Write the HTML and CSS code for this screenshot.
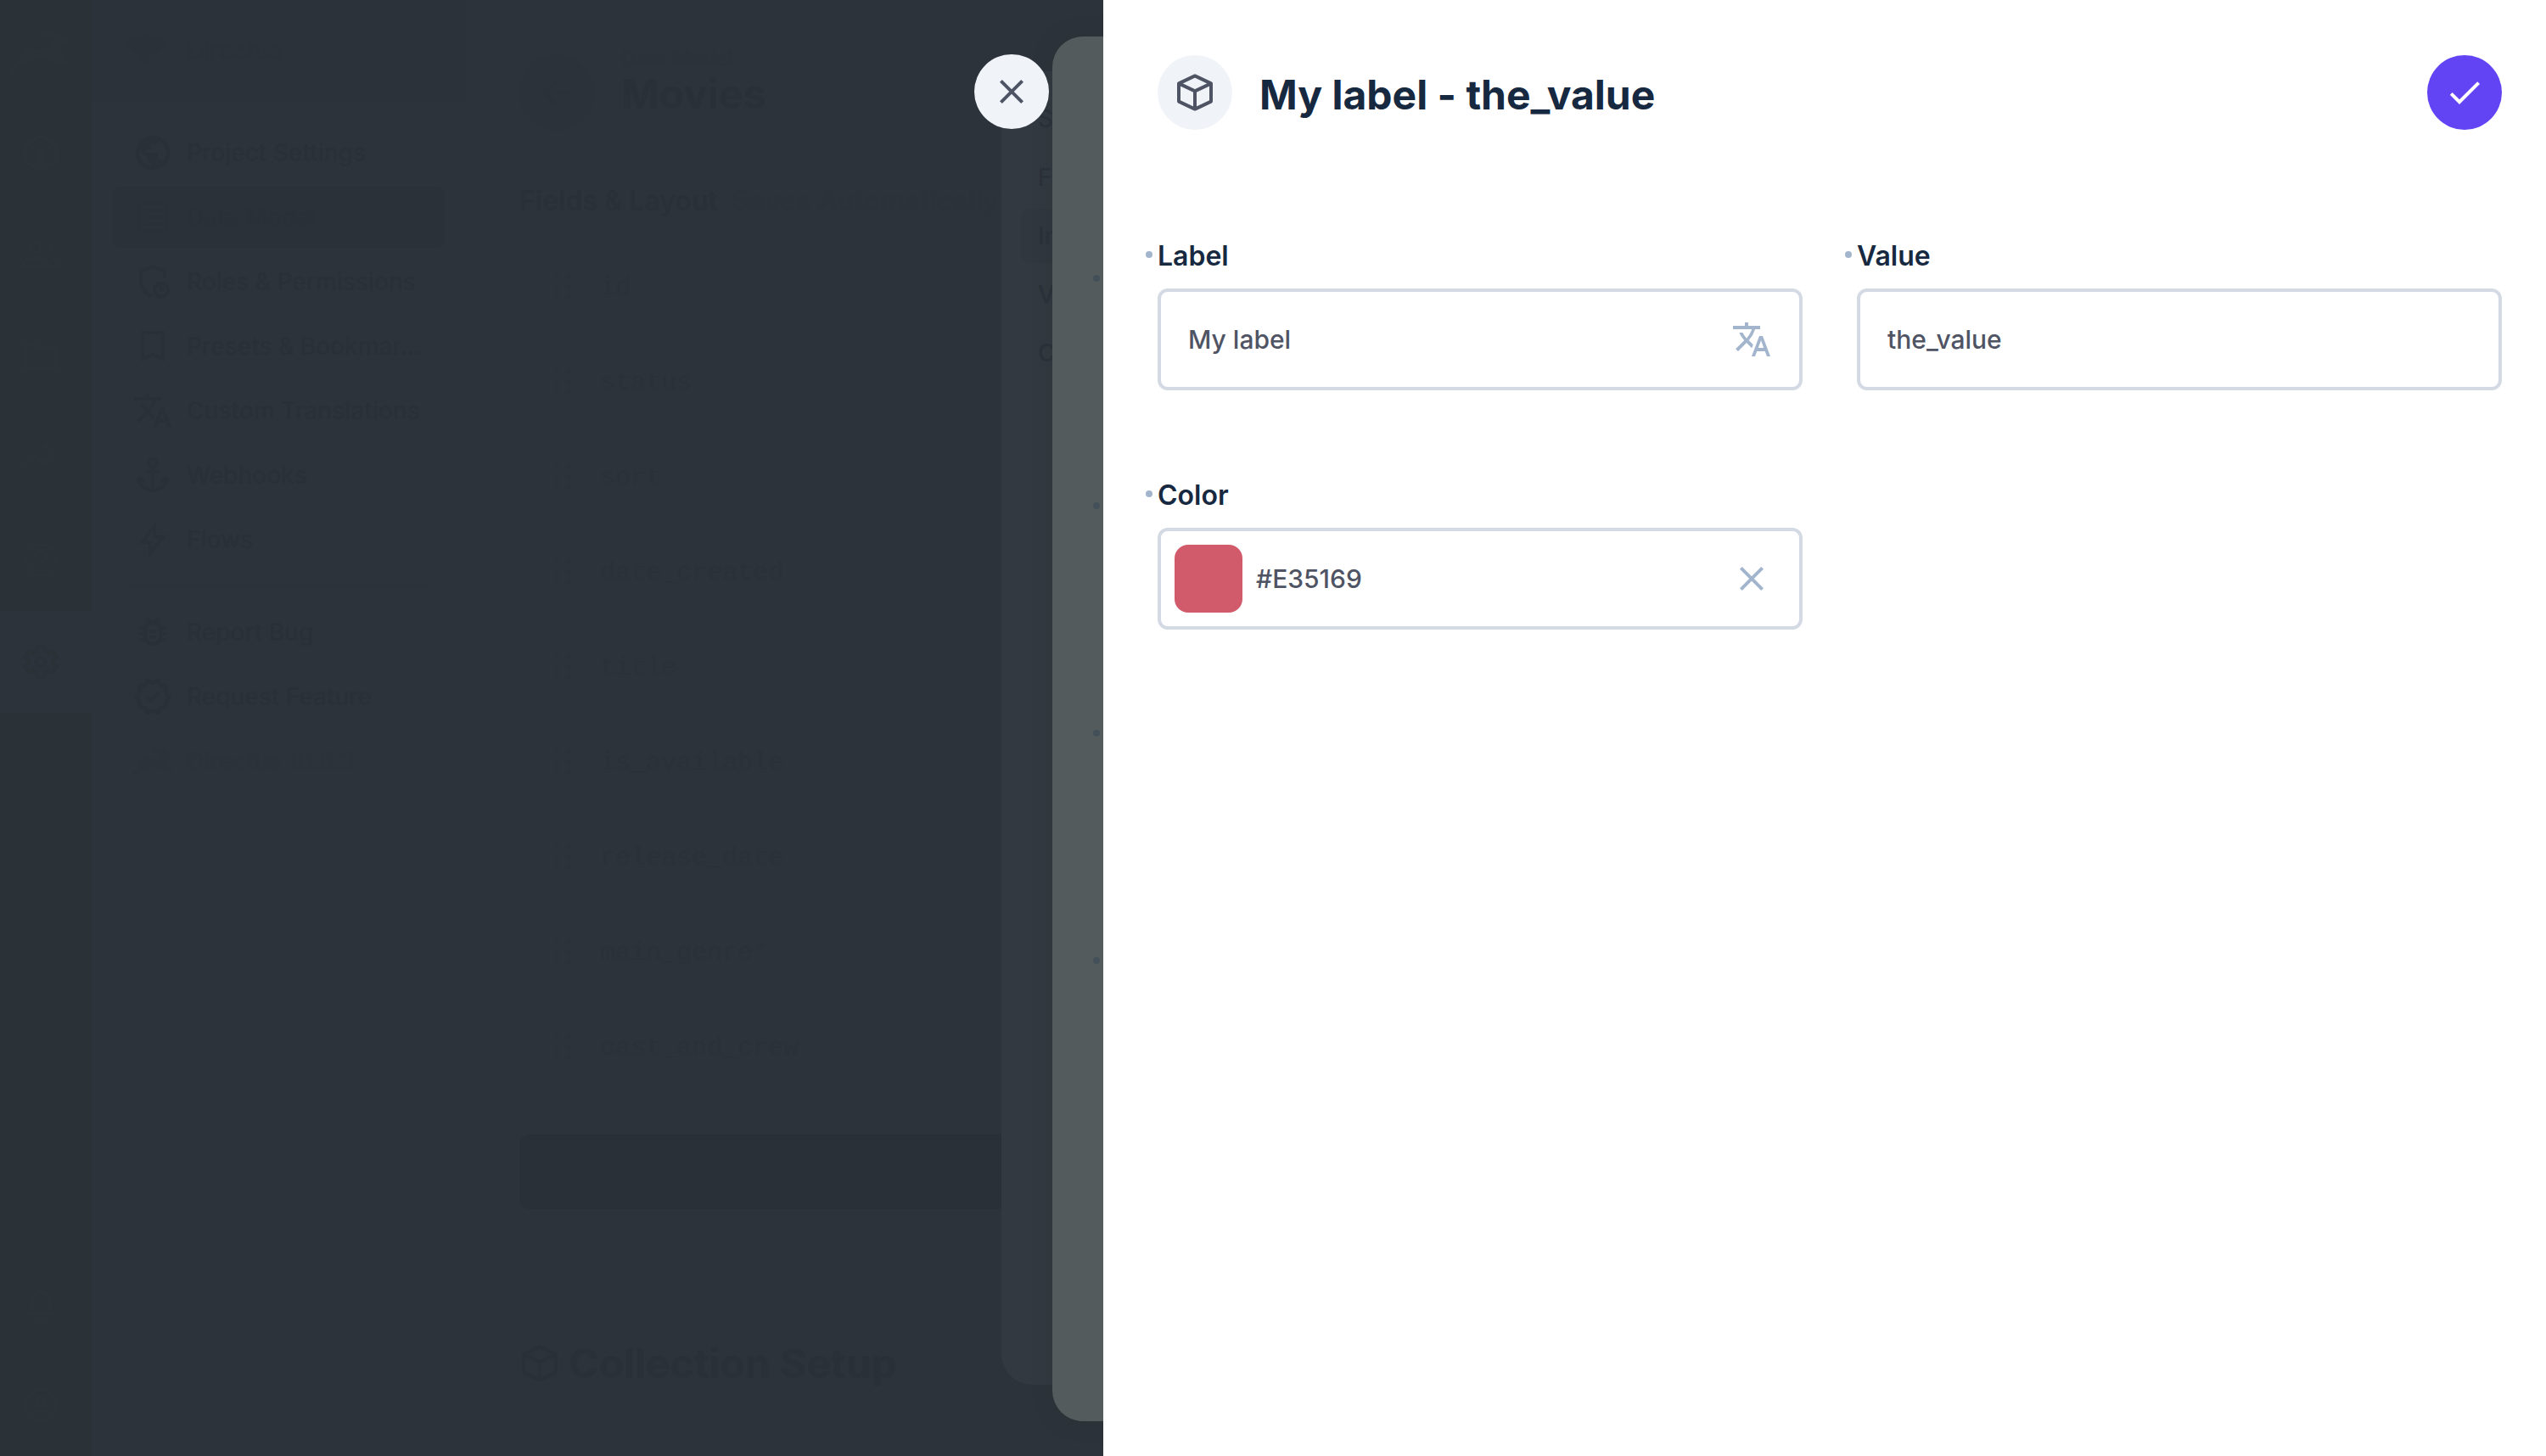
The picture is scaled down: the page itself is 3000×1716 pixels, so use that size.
FILE: index.html
```html
<!DOCTYPE html>
<html lang="en">
<head>
<meta charset="utf-8">
<meta name="viewport" content="width=device-width, initial-scale=1">
<title>My label - the_value</title>
<link rel="stylesheet" href="styles.css">
</head>
<body>
<svg class="sprite" aria-hidden="true">
  <symbol id="i-box" viewBox="0 0 24 24"><path fill="none" stroke="currentColor" stroke-width="2" stroke-linejoin="round" d="M12 2.200 2.500 6.700v10.600L12 21.800l9.500-4.500V6.700zM2.500 6.700l9.500 4.500 9.500-4.500M12 11.200V21.800"/></symbol>
  <symbol id="i-close" viewBox="0 0 24 24"><path fill="none" stroke="currentColor" stroke-width="2" d="M5.700 5.700 18.300 18.300M18.300 5.700 5.700 18.300"/></symbol>
  <symbol id="i-check" viewBox="0 0 24 24"><path fill="currentColor" d="M9 16.170 4.830 12l-1.420 1.410L9 19 21 7l-1.410-1.410z"/></symbol>
  <symbol id="i-translate" viewBox="0 0 24 24"><path fill="currentColor" d="M12.870 15.070l-2.540-2.510.030-.030A17.520 17.520 0 0 0 14.070 6H17V4h-7V2H8v2H1v1.990h11.170C11.500 7.920 10.440 9.750 9 11.350 8.070 10.320 7.300 9.190 6.690 8h-2c.730 1.630 1.730 3.170 2.980 4.560l-5.090 5.020L4 19l5-5 3.110 3.110.760-2.040zM18.500 10h-2L12 22h2l1.120-3h4.750L21 22h2l-4.500-12zm-2.620 7 1.620-4.330L19.120 17h-3.240z"/></symbol>
  <symbol id="i-people" viewBox="0 0 24 24"><path fill="none" stroke="currentColor" stroke-width="2" d="M2 19v-2c0-2 3.500-3 7-3s7 1 7 3v2zM9 5a3 3 0 1 1 0 6 3 3 0 0 1 0-6M15 5a3 3 0 0 1 0 6M18 14.500c2 .5 3.500 1.500 3.500 2.500v2h-3"/></symbol>
  <symbol id="i-folder" viewBox="0 0 24 24"><path fill="none" stroke="currentColor" stroke-width="2" d="M3 5h6l2 2h10v12H3z"/></symbol>
  <symbol id="i-insights" viewBox="0 0 24 24"><path fill="none" stroke="currentColor" stroke-width="2" d="m2 17 7-7 5 5 7-8M15 3v4M13 5h4"/></symbol>
  <symbol id="i-help" viewBox="0 0 24 24"><path fill="none" stroke="currentColor" stroke-width="2" d="M12 3a9 9 0 1 1 0 18 9 9 0 0 1 0-18M9 10a3 3 0 1 1 4.500 2.600C12.500 13.200 12 13.700 12 15M12 16.500v2"/></symbol>
  <symbol id="i-gear" viewBox="0 0 24 24"><path fill="none" stroke="currentColor" stroke-width="2" stroke-linejoin="round" d="M10 3h4l.5 3 2 1 2.700-1 2 3.400L19 11.300v1.400l2.200 1.900-2 3.400-2.700-1-2 1-.5 3h-4l-.5-3-2-1-2.700 1-2-3.400L5 12.700v-1.400L2.800 9.400l2-3.400 2.700 1 2-1z"/><circle cx="12" cy="12" r="2.800" fill="none" stroke="currentColor" stroke-width="2"/></symbol>
  <symbol id="i-globe" viewBox="0 0 24 24"><path fill="currentColor" d="M12 2a10 10 0 1 0 0 20 10 10 0 0 0 0-20zm-1 17.930A8 8 0 0 1 4 12c0-.620.080-1.210.210-1.790L9 15v1a2 2 0 0 0 2 2v1.930zm6.900-2.540A2 2 0 0 0 16 16h-1v-3a1 1 0 0 0-1-1H8v-2h2a1 1 0 0 0 1-1V7h2a2 2 0 0 0 2-2v-.410a8 8 0 0 1 2.900 12.800z"/></symbol>
  <symbol id="i-list" viewBox="0 0 24 24"><path fill="none" stroke="currentColor" stroke-width="2" d="M4 4h16v16H4zM7 8h2M11 8h6M7 12h2M11 12h6M7 16h2M11 16h6"/></symbol>
  <symbol id="i-shield" viewBox="0 0 24 24"><path fill="none" stroke="currentColor" stroke-width="2" d="M19 10V6l-7-3-7 3v5c0 4.500 2.500 8 6.500 9.500"/><circle cx="17" cy="17" r="4" fill="none" stroke="currentColor" stroke-width="2"/><circle cx="17" cy="16" r="1.500" fill="currentColor"/></symbol>
  <symbol id="i-bookmark" viewBox="0 0 24 24"><path fill="none" stroke="currentColor" stroke-width="2" d="M6 4h12v15.500L12 17l-6 2.500z"/></symbol>
  <symbol id="i-anchor" viewBox="0 0 24 24"><path fill="none" stroke="currentColor" stroke-width="2" d="M12 2.500a2.300 2.300 0 1 1 0 4.600 2.300 2.300 0 0 1 0-4.600M12 7v14M8 10h8M4 14c0 4 4 7 8 7s8-3 8-7M3 16l1-2 3 1.500M21 16l-1-2-3 1.500"/></symbol>
  <symbol id="i-bolt" viewBox="0 0 24 24"><path fill="none" stroke="currentColor" stroke-width="2" d="M13 4 6 13.500h4.500V20L18 10.500h-5z"/></symbol>
  <symbol id="i-bug" viewBox="0 0 24 24"><path fill="none" stroke="currentColor" stroke-width="2" d="M12 6.500c3 0 4.500 2 4.500 5v3c0 3-2 4.500-4.500 4.500s-4.500-1.500-4.500-4.500v-3c0-3 1.500-5 4.500-5M8 3.500l3 3M16 3.500l-3 3M4 9.500h4M4 13h4M4 16.500h4M16 9.500h4M16 13h4M16 16.500h4M10 11.500h4M10 15h4"/></symbol>
  <symbol id="i-verified" viewBox="0 0 24 24"><path fill="none" stroke="currentColor" stroke-width="2" stroke-linejoin="round" d="m12 4 3-1.500 1.800 2.700 3.200.8-.3 3.300L22 12l-2.300 2.700.3 3.300-3.200.8L15 21.500 12 20l-3 1.500-1.800-2.700L4 18l.3-3.300L2 12l2.300-2.700L4 6l3.200-.8L9 2.500zM8.500 12l2.500 2.500 4.500-4.500"/></symbol>
  <symbol id="i-bell" viewBox="0 0 24 24"><path fill="none" stroke="currentColor" stroke-width="2" d="M4 18h16M6.500 18v-7a5.500 5.500 0 0 1 11 0v7M12 3v2M10 21h4"/></symbol>
  <symbol id="i-user" viewBox="0 0 24 24"><path fill="none" stroke="currentColor" stroke-width="2" d="M12 3a9 9 0 1 1 0 18 9 9 0 0 1 0-18M12 7a2.800 2.800 0 1 1 0 5.600A2.800 2.800 0 0 1 12 7M6 18c2-3.500 10-3.500 12 0"/></symbol>
  <symbol id="i-gem" viewBox="0 0 24 24"><path fill="currentColor" d="M0 8c6-7 18-7 24 0L12 21z"/></symbol>
  <symbol id="i-back" viewBox="0 0 24 24"><path fill="none" stroke="currentColor" stroke-width="2" d="M20 12H5M12 5l-7 7 7 7"/></symbol>
  <symbol id="i-drag" viewBox="0 0 24 24"><path fill="currentColor" d="M7 4h3v3H7zM14 4h3v3h-3zM7 10h3v3H7zM14 10h3v3h-3zM7 16h3v3H7zM14 16h3v3h-3z"/></symbol>
  <symbol id="i-rabbit" viewBox="0 0 80 50"><path fill="currentColor" d="M0 49c8-8 13-13 18-20 1-6 0-9 1-13 6 5 16 6 26 6 8 0 10-5 8-11-6-2-13-3-15-7 8-6 22-4 30 4 3 3 6 5 6 8-3 5-8 3-10 8 0 7 7 11 14 18l-3 3c-7-6-14-5-22-6-6-1-8-4-13-5-8 2-11 6-19 8-9 3-14 10-19 8z"/></symbol>
</svg>

<div class="app">
  <aside class="modules" aria-label="Modules">
    <svg class="logo"><use href="#i-rabbit"/></svg>
    <a class="module" href="#" aria-label="Content"><svg class="icon"><use href="#i-box"/></svg></a>
    <a class="module" href="#" aria-label="Users"><svg class="icon"><use href="#i-people"/></svg></a>
    <a class="module" href="#" aria-label="Files"><svg class="icon"><use href="#i-folder"/></svg></a>
    <a class="module" href="#" aria-label="Insights"><svg class="icon"><use href="#i-insights"/></svg></a>
    <a class="module" href="#" aria-label="Help"><svg class="icon"><use href="#i-help"/></svg></a>
    <a class="module module-active" href="#" aria-label="Settings"><svg class="icon"><use href="#i-gear"/></svg></a>
    <a class="module module-bottom" href="#" aria-label="Notifications"><svg class="icon"><use href="#i-bell"/></svg></a>
    <a class="module" href="#" aria-label="Profile"><svg class="icon"><use href="#i-user"/></svg></a>
  </aside>

  <div class="sidebar">
    <div class="project"><svg class="icon"><use href="#i-gem"/></svg><span>Directus</span></div>
    <nav class="nav">
      <a class="nav-item" href="#"><svg class="icon"><use href="#i-globe"/></svg><span>Project Settings</span></a>
      <a class="nav-item nav-active" href="#"><svg class="icon"><use href="#i-list"/></svg><span>Data Model</span></a>
      <a class="nav-item" href="#"><svg class="icon"><use href="#i-shield"/></svg><span>Roles &amp; Permissions</span></a>
      <a class="nav-item" href="#"><svg class="icon"><use href="#i-bookmark"/></svg><span>Presets &amp; Bookmar…</span></a>
      <a class="nav-item" href="#"><svg class="icon"><use href="#i-translate"/></svg><span>Custom Translations</span></a>
      <a class="nav-item" href="#"><svg class="icon"><use href="#i-anchor"/></svg><span>Webhooks</span></a>
      <a class="nav-item" href="#"><svg class="icon"><use href="#i-bolt"/></svg><span>Flows</span></a>
      <hr class="divider">
      <a class="nav-item" href="#"><svg class="icon"><use href="#i-bug"/></svg><span>Report Bug</span></a>
      <a class="nav-item" href="#"><svg class="icon"><use href="#i-verified"/></svg><span>Request Feature</span></a>
      <a class="nav-item nav-faint" href="#"><svg class="icon"><use href="#i-rabbit"/></svg><span>Directus 10.6.3</span></a>
    </nav>
  </div>

  <main class="main">
    <header class="main-head">
      <button class="round back" type="button" aria-label="Back"><svg class="icon"><use href="#i-back"/></svg></button>
      <div>
        <p class="crumb">Data Model</p>
        <h1 class="title">Movies</h1>
      </div>
    </header>
    <h2 class="section">Fields &amp; Layout <span class="faint">Saves Automatically</span></h2>
    <ul class="rows">
      <li class="row"><svg class="icon"><use href="#i-drag"/></svg>id</li>
      <li class="row"><svg class="icon"><use href="#i-drag"/></svg>status</li>
      <li class="row"><svg class="icon"><use href="#i-drag"/></svg>sort</li>
      <li class="row"><svg class="icon"><use href="#i-drag"/></svg>date_created</li>
      <li class="row"><svg class="icon"><use href="#i-drag"/></svg>title</li>
      <li class="row"><svg class="icon"><use href="#i-drag"/></svg>is_available</li>
      <li class="row"><svg class="icon"><use href="#i-drag"/></svg>release_date</li>
      <li class="row"><svg class="icon"><use href="#i-drag"/></svg>main_genre*</li>
      <li class="row"><svg class="icon"><use href="#i-drag"/></svg>cast_and_crew</li>
    </ul>
    <button class="create" type="button" aria-label="Create Field"></button>
    <h2 class="title setup"><svg class="icon"><use href="#i-box"/></svg>Collection Setup</h2>
  </main>
</div>

<div class="sheet sheet-back">
  <nav class="tabs">
    <a class="tab" href="#">S</a>
    <a class="tab" href="#">F</a>
    <a class="tab tab-active" href="#">In</a>
    <a class="tab" href="#">V</a>
    <a class="tab" href="#">C</a>
  </nav>
</div>
<div class="sheet sheet-front">
  <i class="dot"></i><i class="dot"></i><i class="dot"></i><i class="dot"></i>
</div>
<button class="round close" type="button" aria-label="Close"><svg class="icon"><use href="#i-close"/></svg></button>

<section class="drawer" role="dialog" aria-labelledby="drawer-title">
  <header class="drawer-head">
    <span class="round badge"><svg class="icon"><use href="#i-box"/></svg></span>
    <h1 class="title drawer-title" id="drawer-title">My label - the_value</h1>
    <button class="round save" type="button" aria-label="Save"><svg class="icon"><use href="#i-check"/></svg></button>
  </header>
  <form class="form">
    <div class="field">
      <label class="label" for="f-label">Label</label>
      <div class="control">
        <input class="input" id="f-label" type="text" value="My label">
        <button class="tool" type="button" aria-label="Translate"><svg class="icon"><use href="#i-translate"/></svg></button>
      </div>
    </div>
    <div class="field">
      <label class="label" for="f-value">Value</label>
      <div class="control"><input class="input" id="f-value" type="text" value="the_value"></div>
    </div>
    <div class="field">
      <label class="label" for="f-color">Color</label>
      <div class="control control-color">
        <button class="swatch" type="button" aria-label="Choose color"></button>
        <input class="input" id="f-color" type="text" value="#E35169">
        <button class="tool" type="button" aria-label="Clear color"><svg class="icon"><use href="#i-close"/></svg></button>
      </div>
    </div>
  </form>
</section>
</body>
</html>
```

FILE: styles.css
```css
:root {
  --shade: #2c333a;
  --shade-deep: #2a3137;
  --shade-text: #2a3038;
  --border: #d3dae4;
  --muted: #a2b5cd;
  --text: #4f5464;
  --heading: #172940;
}

* { box-sizing: border-box; }

body {
  position: relative;
  min-height: 100vh;
  margin: 0;
  overflow: hidden;
  background: var(--shade);
  color: var(--shade-text);
  font: 500 28px/40px Inter, "Liberation Sans", sans-serif;
}

h1, h2, p, ul { margin: 0; padding: 0; }
a { color: inherit; text-decoration: none; }
button { padding: 0; border: 0; background: none; color: inherit; font: inherit; }

.sprite { position: absolute; width: 0; height: 0; }
.icon { flex: none; width: 48px; height: 48px; }

.round {
  display: flex;
  flex: none;
  align-items: center;
  justify-content: center;
  width: 88px;
  height: 88px;
  border-radius: 50%;
}

.title {
  font-size: 48px;
  line-height: 52px;
  font-weight: 700;
}

/* Dimmed application behind the drawer */
.app { display: flex; min-height: 100vh; }

.modules {
  display: flex;
  flex: none;
  flex-direction: column;
  width: 108px;
  background: var(--shade-deep);
  color: #2b3238;
}
.logo { width: 80px; height: 48px; margin: 36px 8px; }
.module {
  display: flex;
  align-items: center;
  height: 120px;
  padding-left: 24px;
}
.module-active { background: var(--shade); color: var(--shade-deep); }
.module-bottom { margin-top: auto; }

.sidebar { flex: none; width: 440px; }
.project {
  display: flex;
  align-items: center;
  gap: 24px;
  height: 120px;
  padding-left: 40px;
  background: #2b3239;
  color: #2a3138;
}
.nav {
  display: flex;
  flex-direction: column;
  gap: 4px;
  padding: 24px;
}
.nav-item {
  display: flex;
  align-items: center;
  gap: 16px;
  height: 72px;
  padding: 0 20px 0 24px;
  border-radius: 12px;
}
.nav-item span { white-space: nowrap; }
.nav-active { background: #2a3138; color: #293037; }
.nav-faint { color: #2b3239; }
.divider {
  width: 360px;
  height: 4px;
  margin: 11px 16px 14px;
  border: 0;
  background: #2b3239;
}

.main { flex: 1; padding: 53px 64px 0; }
.main-head { display: flex; gap: 32px; }
.back { margin-top: 12px; background: #2b3239; color: #2a3138; }
.crumb { font-size: 24px; line-height: 32px; font-weight: 600; color: #2b3239; }
.section { margin-top: 60px; font-size: 32px; line-height: 48px; font-weight: 600; }
.faint { margin-left: 8px; color: #2b3239; }
.rows {
  display: flex;
  flex-direction: column;
  gap: 8px;
  margin-top: 26px;
  list-style: none;
}
.row {
  display: flex;
  align-items: center;
  gap: 20px;
  height: 104px;
  padding-left: 27px;
  color: #2a3138;
  font: 500 30px/40px "Liberation Mono", monospace;
}
.row .icon { color: #2b3239; }
.create {
  display: block;
  width: 100%;
  height: 88px;
  margin-top: 50px;
  border-radius: 12px;
  background: #2a3037;
}
.setup { display: flex; align-items: center; gap: 10px; margin-top: 156px; }

/* Stacked sheets peeking out from under the drawer */
.sheet { position: absolute; right: 0; }
.sheet-back {
  top: 84px;
  bottom: 84px;
  left: 1180px;
  padding: 24px 23px;
  border-radius: 36px 0 0 36px;
  background: #323940;
  color: #2a3139;
}
.tabs { display: flex; flex-direction: column; gap: 5px; }
.tab { height: 64px; padding-left: 20px; border-radius: 12px; line-height: 64px; }
.tab-active { background: #30373e; }
.sheet-front {
  top: 43px;
  bottom: 41px;
  left: 1240px;
  display: flex;
  flex-direction: column;
  gap: 260px;
  padding: 281px 48px;
  border-radius: 36px 0 0 36px;
  background: #535b5d;
  box-shadow: 0 0 20px rgba(44, 51, 52, .5);
}
.dot { width: 8px; height: 8px; border-radius: 50%; background: #43505a; }

.close {
  position: absolute;
  top: 64px;
  left: 1148px;
  background: #f0f4f9;
  color: var(--text);
}

/* Drawer */
.drawer {
  position: absolute;
  inset: 0 0 0 1300px;
  padding: 65px 52px 64px 64px;
  background: #fff;
  color: var(--heading);
}
.drawer-head { display: flex; align-items: center; gap: 32px; }
.drawer-title { flex: 1; padding-top: 6px; }
.badge { background: #f0f4f9; color: var(--text); }
.save { background: #6244f4; color: #fff; }

.form {
  display: grid;
  grid-template-columns: 1fr 1fr;
  gap: 100px 64px;
  margin-top: 125px;
}
.label {
  position: relative;
  display: block;
  margin-bottom: 14px;
  font-size: 32px;
  line-height: 48px;
  font-weight: 600;
}
.label::before {
  content: "";
  position: absolute;
  top: 18px;
  left: -14px;
  width: 8px;
  height: 8px;
  border-radius: 50%;
  background: var(--muted);
}
.control {
  display: flex;
  align-items: center;
  height: 120px;
  padding: 0 32px;
  border: 4px solid var(--border);
  border-radius: 12px;
}
.control-color { gap: 16px; padding-left: 16px; }
.input {
  flex: 1;
  min-width: 0;
  height: 48px;
  padding: 0;
  border: 0;
  outline: 0;
  background: none;
  color: var(--text);
  font: 500 30px/48px Inter, "Liberation Sans", sans-serif;
}
.tool { display: flex; color: var(--muted); }
.swatch { width: 80px; height: 80px; border-radius: 16px; background: #d15b6b; }
```
